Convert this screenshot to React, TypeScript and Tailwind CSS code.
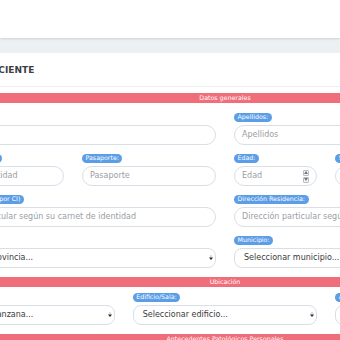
import React from "react";

const Label = ({ children }: { children?: React.ReactNode }) =>
  children ? (
    <span className="inline-flex h-[9px] items-center whitespace-nowrap rounded-full bg-[#5b9de6] px-[3.5px] text-[6.3px] leading-none text-white">
      {children}
    </span>
  ) : (
    <span className="h-[9px]" />
  );

const Spinner = () => (
  <div className="flex flex-col gap-[1px]">
    <div className="flex h-[6px] w-[6px] items-center justify-center rounded-[1px] border border-[#b9bec6] bg-[#f4f5f7]">
      <svg width="4" height="3" viewBox="0 0 4 3"><path d="M0 3 L2 0 L4 3Z" fill="#777" /></svg>
    </div>
    <div className="flex h-[6px] w-[6px] items-center justify-center rounded-[1px] border border-[#b9bec6] bg-[#f4f5f7]">
      <svg width="4" height="3" viewBox="0 0 4 3"><path d="M0 0 L2 3 L4 0Z" fill="#777" /></svg>
    </div>
  </div>
);

const SelectArrow = () => (
  <svg width="4" height="6" viewBox="0 0 4 6" className="shrink-0">
    <path d="M0.5 1.5 L2 0 L3.5 1.5Z" fill="#bbb" />
    <path d="M0 2.5 L2 5 L4 2.5Z" fill="#222" />
  </svg>
);

type FieldProps = {
  label?: string;
  placeholder?: string;
  span: string;
  select?: boolean;
  number?: boolean;
};

const Field = ({ label, placeholder, span, select, number }: FieldProps) => (
  <div className={`${span} flex flex-col items-start px-[9px]`}>
    <Label>{label}</Label>
    {select ? (
      <div className="mt-[3px] flex h-[20px] w-full items-center justify-between rounded-[8px] border border-[#d9dee7] bg-white pl-[9px] pr-[2px]">
        <span className="whitespace-nowrap text-[8px] text-[#3a3a3a]">{placeholder}</span>
        <SelectArrow />
      </div>
    ) : (
      <div className="mt-[3px] flex h-[20px] w-full items-center justify-between rounded-full border border-[#d9dee7] bg-white pl-[7px] pr-[7px]">
        <span className="whitespace-nowrap text-[8px] text-[#9a9ea4]">{placeholder}</span>
        {number && <Spinner />}
      </div>
    )}
  </div>
);

const Bar = ({ children }: { children: React.ReactNode }) => (
  <div className="flex h-[10px] items-center justify-center bg-[#f06e79] text-[6.3px] leading-none text-white">
    {children}
  </div>
);

export default function App() {
  return (
    <div className="h-[340px] w-[340px] overflow-hidden bg-[#edf0f3] font-['DejaVu_Sans',sans-serif]">
      <div className="h-[38px] bg-white shadow-[0_1px_2px_rgba(0,0,0,0.12)]" />
      <div className="pt-[15px]">
        <div className="ml-[-95px] w-[640px] bg-white px-[16px]">
          <div className="flex h-[34px] items-center border-b border-[#eceef1] pl-[5px] pt-[3px]">
            <span className="whitespace-nowrap text-[9px] font-bold text-[#3b3f45]">DATOS DEL PACIENTE</span>
          </div>
          <div className="pt-[6px]">
            <Bar>Datos generales</Bar>
            <div className="pt-[10px]">
              <div className="mb-[9px] grid grid-cols-12">
                <Field span="col-span-6" label="Nombre(s):" placeholder="Nombre" />
                <Field span="col-span-6" label="Apellidos:" placeholder="Apellidos" />
              </div>
              <div className="mb-[9px] grid grid-cols-12">
                <Field span="col-span-3" label="Carnet de Identidad:" placeholder="Carnet de identidad" />
                <Field span="col-span-3" label="Pasaporte:" placeholder="Pasaporte" />
                <Field span="col-span-2" label="Edad:" placeholder="Edad" number />
                <Field span="col-span-4" label="Sexo:" placeholder="Sexo" />
              </div>
              <div className="mb-[9px] grid grid-cols-12">
                <Field span="col-span-6" label="Dirección Particular (por CI)" placeholder="Dirección particular según su carnet de identidad" />
                <Field span="col-span-6" label="Dirección Residencia:" placeholder="Dirección particular según su carnet de identidad" />
              </div>
              <div className="mb-[9px] grid grid-cols-12">
                <Field span="col-span-6" label="Provincia:" placeholder="Seleccionar provincia..." select />
                <Field span="col-span-6" label="Municipio:" placeholder="Seleccionar municipio..." select />
              </div>
            </div>
            <Bar>Ubicación</Bar>
            <div className="pt-[6px]">
              <div className="mb-[9px] grid grid-cols-12">
                <Field span="col-span-4" label="Manzana:" placeholder="Seleccionar manzana..." select />
                <Field span="col-span-4" label="Edificio/Sala:" placeholder="Seleccionar edificio..." select />
                <Field span="col-span-4" label="Apartamento:" placeholder="Seleccionar apartamento..." select />
              </div>
            </div>
            <Bar>Antecedentes Patológicos Personales</Bar>
            <div className="h-[40px]" />
          </div>
        </div>
      </div>
    </div>
  );
}
